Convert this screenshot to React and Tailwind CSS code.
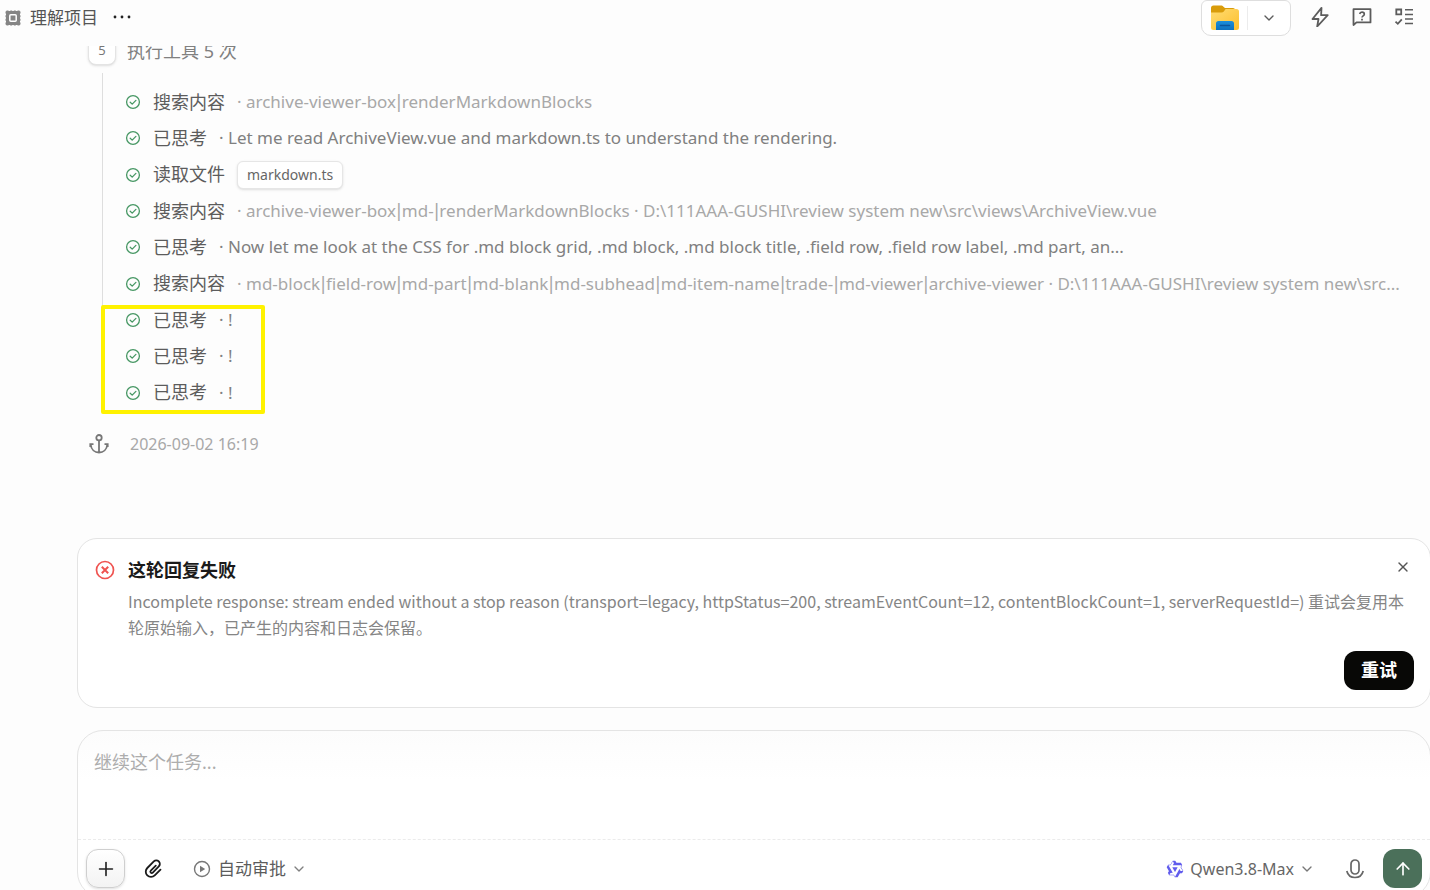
import {
    ArrowUp,
    ChevronDown,
    Plus,
    X
} from "lucide-react";
import React, { Fragment } from "react";

const steps = [
    { label: "搜索内容", text: "archive-viewer-box|renderMarkdownBlocks" },
    { label: "已思考", text: "Let me read ArchiveView.vue and markdown.ts to understand the rendering.", thought: true },
    { label: "读取文件", file: "markdown.ts" },
    { label: "搜索内容", text: "archive-viewer-box|md-|renderMarkdownBlocks · D:\\111AAA-GUSHI\\review system new\\src\\views\\ArchiveView.vue" },
    { label: "已思考", text: "Now let me look at the CSS for .md block grid, .md block, .md block title, .field row, .field row label, .md part, an...", thought: true },
    { label: "搜索内容", text: "md-block|field-row|md-part|md-blank|md-subhead|md-item-name|trade-|md-viewer|archive-viewer · D:\\111AAA-GUSHI\\review system new\\src..." },
    { label: "已思考", text: "!", thought: true },
    { label: "已思考", text: "!", thought: true },
    { label: "已思考", text: "!", thought: true },
];

const ProjectIcon = () => (
    <svg className="w-4 h-4 shrink-0" viewBox="0 0 16 16" fill="none">
        <rect x="1" y="1" width="14" height="14" rx="0.500" fill="#858585" />
        <path d="M2.500.500v15M6.200.500v15M9.800.500v15M13.500.500v15M.500 2.500h15M.500 6.200h15M.500 9.800h15M.500 13.500h15" stroke="#858585" strokeWidth="2" />
        <rect x="4.800" y="4.800" width="6.400" height="6.400" rx="1" fill="#858585" stroke="#fff" strokeWidth="1.500" />
    </svg>
);

const FolderIcon = () => (
    <svg className="w-7 h-[26px]" viewBox="0 0 28 26">
        <defs>
            <linearGradient id="folder" x1="0" y1="0" x2="1" y2="1">
                <stop offset="0" stopColor="#ffdc73" />
                <stop offset="1" stopColor="#fdbf2d" />
            </linearGradient>
            <linearGradient id="tray" x1="0" y1="0" x2="0" y2="1">
                <stop offset="0" stopColor="#1b8fdc" />
                <stop offset="1" stopColor="#0f70bd" />
            </linearGradient>
        </defs>
        <path d="M0 3a2.500 2.500 0 0 1 2.500-2.500h7.500c1 0 1.600.300 2.200 1L14 3H22a2 2 0 0 1 2 2V12H0Z" fill="#d99c0b" />
        <path d="M0 7.500h10.500c1 0 1.700-.300 2.300-.900l1.800-2.600h10.900A2.500 2.500 0 0 1 28 6.500v16a2.500 2.500 0 0 1-2.500 2.500h-23A2.500 2.500 0 0 1 0 22.500Z" fill="url(#folder)" />
        <path d="M5 25v-6.500A2.500 2.500 0 0 1 7.500 16h13a2.500 2.500 0 0 1 2.500 2.500V25Z" fill="url(#tray)" />
        <path d="M9.500 20.500h9" stroke="#0b559c" strokeWidth="1.500" strokeLinecap="round" />
    </svg>
);

const BoltIcon = () => (
    <svg className="w-5 h-5" viewBox="0 0 20 20" fill="none" stroke="currentColor" strokeWidth="1.8" strokeLinejoin="round">
        <path d="M11.500.9 2.500 12h6L7.200 19.500 17.700 8.200h-6.600Z" />
    </svg>
);

const HelpChatIcon = () => (
    <svg className="w-5 h-5" viewBox="0 0 20 20" fill="none" stroke="currentColor" strokeWidth="1.8">
        <path d="M1.500 18V2.200h17v13.200H4.500Z" strokeLinejoin="round" />
        <path d="M7.700 7c.200-1.200 1.100-1.800 2.300-1.800s2.300.800 2.300 2c0 1.600-2.300 1.700-2.300 3.400M10 11.700v1.700" strokeWidth="1.700" />
    </svg>
);

const TodoIcon = () => (
    <svg className="w-5 h-5" viewBox="0 0 20 20" fill="none" stroke="currentColor" strokeWidth="1.8">
        <path d="M2.300 2.500h4.900v4.900H2.300ZM1.500 14.600l2.300 2.200 4-4.400" />
        <path d="M11 2.800h8M11 7.500h8M11 12h8M11 16.500h8" strokeWidth="1.500" />
    </svg>
);

const CheckIcon = () => (
    <svg className="w-4 h-4 shrink-0 text-[#479764]" viewBox="0 0 16 16" fill="none" stroke="currentColor" strokeWidth="1.3" strokeLinecap="round" strokeLinejoin="round">
        <circle cx="8" cy="8" r="6.400" />
        <path d="m5.200 8.200 2 1.900 3.700-3.700" />
    </svg>
);

const AnchorIcon = () => (
    <svg className="w-5 h-5" viewBox="0 0 20 20" fill="none" stroke="currentColor" strokeWidth="1.800">
        <circle cx="10" cy="3.700" r="2.700" />
        <path d="M10 6.400V18.500M1.300 13V10.200H4.500M18.700 13V10.200H15.500M1.700 10.500c.500 5 4 8 8.300 8s7.800-3 8.300-8" />
    </svg>
);

const FailIcon = () => (
    <svg className="w-5 h-5 shrink-0 text-[#ef5350]" viewBox="0 0 20 20" fill="none" stroke="currentColor" strokeWidth="1.7">
        <circle cx="10" cy="10" r="8.500" />
        <path d="m6.800 6.800 6.400 6.400M13.200 6.800l-6.400 6.400" strokeWidth="2" />
    </svg>
);

const ClipIcon = () => (
    <svg className="w-5 h-5" viewBox="0 0 20 20" fill="none" stroke="currentColor" strokeWidth="1.8" strokeLinecap="round" strokeLinejoin="round">
        <path d="m12.800 6.600-5 5a1.400 1.400 0 0 0 2 2l6-6.200a3.500 3.500 0 0 0-5-5L4.300 9a5.200 5.200 0 0 0 7.400 7.400l5.800-5.800" />
    </svg>
);

const PlayIcon = () => (
    <svg className="w-[18px] h-[18px]" viewBox="0 0 18 18" fill="none">
        <circle cx="9" cy="9" r="7.500" stroke="#777" strokeWidth="1.400" />
        <path d="M7 5.800v6.400L12.200 9Z" fill="#777" />
    </svg>
);

const QwenIcon = () => (
    <svg className="w-[18px] h-[18px]" viewBox="0 0 24 24" fill="#615ced">
        <path d="M12.604 1.340c.393.690.784 1.382 1.174 2.075a.180.180 0 0 0 .157.091h5.552c.174 0 .322.110.446.327l1.454 2.570c.190.337.240.478.024.837-.260.430-.513.864-.760 1.300l-.367.658c-.106.196-.223.280-.040.512l2.652 4.637c.172.301.111.494-.043.770-.437.785-.882 1.564-1.335 2.340-.159.272-.352.375-.680.370-.777-.016-1.552-.010-2.327.016a.099.099 0 0 0-.081.050 575.097 575.097 0 0 1-2.705 4.740c-.169.293-.380.363-.725.364-.997.003-2.002.004-3.017.002a.537.537 0 0 1-.465-.271l-1.335-2.323a.090.090 0 0 0-.083-.049H4.982c-.285.030-.553-.001-.805-.092l-1.603-2.770a.543.543 0 0 1-.002-.540l1.207-2.120a.198.198 0 0 0 0-.197 550.951 550.951 0 0 1-1.875-3.272l-.790-1.395c-.160-.310-.173-.496.095-.965.465-.813.927-1.625 1.387-2.436.132-.234.304-.334.584-.335a338.300 338.300 0 0 1 2.589-.001.124.124 0 0 0 .107-.063l2.806-4.895a.488.488 0 0 1 .422-.246c.524-.001 1.053 0 1.583-.006L11.704 1c.341-.003.724.032.900.340Zm-3.432.403a.060.060 0 0 0-.052.030L6.254 6.788a.157.157 0 0 1-.135.078H3.253c-.056 0-.070.025-.041.074l5.810 10.156c.025.042.013.062-.034.063l-2.795.015a.218.218 0 0 0-.200.116l-1.320 2.310c-.044.078-.021.118.068.118l5.716.008c.046 0 .080.020.104.061l1.403 2.454c.046.081.092.082.139 0l5.006-8.760.783-1.382a.055.055 0 0 1 .096 0l1.424 2.530a.122.122 0 0 0 .107.062l2.763-.020a.040.040 0 0 0 .035-.020.041.041 0 0 0 0-.040l-2.900-5.086a.108.108 0 0 1 0-.113l.293-.507 1.120-1.977c.024-.041.012-.062-.035-.062H9.200c-.059 0-.073-.026-.043-.077l1.434-2.505a.107.107 0 0 0 0-.114L9.225 1.774a.060.060 0 0 0-.053-.031Zm6.290 8.020c.046 0 .058.020.034.060l-.832 1.465-2.613 4.585a.056.056 0 0 1-.050.029.058.058 0 0 1-.050-.029L8.498 9.841c-.020-.034-.010-.052.028-.054l.216-.012 6.722-.012Z" />
    </svg>
);

const MicIcon = () => (
    <svg className="w-5 h-5" viewBox="0 0 20 20" fill="none" stroke="currentColor" strokeWidth="1.700">
        <rect x="6" y="1" width="8" height="14" rx="4" />
        <path d="M1.800 12c1 4 4 6.500 8.200 6.500s7.200-2.500 8.200-6.500" />
    </svg>
);

// Search patterns get a narrower bar between their alternatives
const Pattern = ({ text }) =>
    text.split("|").map((part, i) => (
        <Fragment key={i}>
            {i > 0 && <span className="font-['DejaVu_Sans',sans-serif]">|</span>}
            {part}
        </Fragment>
    ));

const Step = ({ step }) => (
    <li className="flex items-center min-w-0">
        <CheckIcon />
        <span className="ms-3 shrink-0 text-[18px] text-[#5c5c5c]">{step.label}</span>
        {step.file ? (
            <button className="ms-3 h-7 px-[9px] rounded-md border border-[#e6e6e6] bg-white text-[14px] text-[#666] shadow-sm">
                {step.file}
            </button>
        ) : (
            <span className={`ms-3 truncate text-[17px] leading-[26px] ${step.thought ? "text-[#808080]" : "text-[#a8a8a8]"}`}>
                · <Pattern text={step.text} />
            </span>
        )}
    </li>
);

const Header = () => (
    <header className="h-[46px] shrink-0 flex items-start justify-between ps-[5px] pe-4">
        <div className="h-9 flex items-center">
            <ProjectIcon />
            <h1 className="ms-[9px] text-[17px] text-[#555]">理解项目</h1>
            <button className="ms-[14px] p-px pb-[3px] text-[#222]" aria-label="更多">
                <svg className="w-[18px] h-1" viewBox="0 0 18 4" fill="currentColor">
                    <circle cx="2" cy="2" r="1.400" />
                    <circle cx="9" cy="2" r="1.400" />
                    <circle cx="16" cy="2" r="1.400" />
                </svg>
            </button>
        </div>
        <div className="flex items-start text-[#5c5c5c]">
            <div className="h-9 w-[90px] flex items-center rounded-b-[10px] rounded-t-md border border-[#dedede] bg-white">
                <button className="ps-[9px] pe-2" aria-label="打开文件夹">
                    <FolderIcon />
                </button>
                <button className="h-6 flex-1 flex items-center justify-center border-s border-[#ececec]" aria-label="选择应用">
                    <ChevronDown className="w-4 h-4" strokeWidth={2} />
                </button>
            </div>
            <div className="h-[34px] ms-[19px] flex items-center gap-[22px]">
                <button aria-label="快捷操作"><BoltIcon /></button>
                <button aria-label="帮助"><HelpChatIcon /></button>
                <button aria-label="任务列表"><TodoIcon /></button>
            </div>
        </div>
    </header>
);

const Timeline = () => (
    <section className="h-[475px] shrink-0 overflow-hidden ps-[88px] pe-[18px]">
        {/* Group title, scrolled partly under the header */}
        <div className="-mt-[9px] h-7 flex items-center">
            <span className="w-7 h-7 flex items-center justify-center rounded-lg border border-[#e4e4e4] bg-white text-[13px] text-[#777] shadow-sm">
                5
            </span>
            <h2 className="ms-[11px] text-[18px] text-[#808080]">执行工具 5 次</h2>
        </div>

        <div className="relative mt-2 ms-[14px] border-s border-[#dedede] ps-[22px] pt-[11px] pb-px">
            <ul className="grid h-[327px] auto-rows-fr">
                {steps.map((step, i) => (
                    <Step key={i} step={step} />
                ))}
            </ul>
            {/* Highlight over the last three steps */}
            <div className="absolute -start-0.5 -bottom-0.5 w-[164px] h-[109px] rounded-xs border-4 border-[#fff200]" />
        </div>

        <div className="mt-5 ps-px h-6 flex items-center text-[#777]">
            <AnchorIcon />
            <time className="ms-[21px] text-[16px] text-[#a8a8a8]">2026-09-02 16:19</time>
        </div>
    </section>
);

const FailureCard = () => (
    <section className="shrink-0 rounded-[20px] border border-[#e4e4e4] bg-white ps-[17px] pe-4 pt-[18px] pb-[17px]">
        <div className="flex items-start">
            <span className="pt-[3px]"><FailIcon /></span>
            <div className="ms-[13px] flex-1 min-w-0">
                <div className="flex items-start justify-between">
                    <h2 className="text-[18px] leading-[26px] font-bold text-[#1a1a1a]">这轮回复失败</h2>
                    <button className="pt-0.5 pe-[3px] text-[#555]" aria-label="关闭">
                        <X className="w-4 h-4" strokeWidth={2} />
                    </button>
                </div>
                <p className="mt-[5px] text-[16px] leading-[26px] text-[#858585] font-['Noto_Sans_CJK_SC',sans-serif]">
                    Incomplete response: stream ended without a stop reason (transport=legacy, httpStatus=200, streamEventCount=12, contentBlockCount=1, serverRequestId=) 重试会复用本轮原始输入，已产生的内容和日志会保留。
                </p>
            </div>
        </div>
        <div className="mt-[11px] flex justify-end">
            <button className="h-[39px] w-[70px] rounded-xl bg-[#080806] text-[18px] font-bold text-white">重试</button>
        </div>
    </section>
);

const Composer = () => (
    <form className="mt-[22px] shrink-0 rounded-[26px] border border-[#e4e4e4] bg-linear-to-b from-[#fcfcfc] to-white to-30%">
        <textarea
            className="block w-full h-[108px] resize-none bg-transparent px-4 pt-[18px] text-[18px] leading-[26px] outline-none placeholder:text-[#adadad]"
            placeholder="继续这个任务..."
            aria-label="继续这个任务"
        />
        <div className="h-[58px] flex items-center justify-between border-t border-dashed border-[#ebebeb] px-2">
            <div className="flex items-center">
                <button type="button" className="w-[39px] h-[39px] flex items-center justify-center rounded-xl border border-[#cfcfcf] bg-linear-to-b from-white to-[#f3f3f3] text-[#222] shadow-sm" aria-label="添加">
                    <Plus className="w-[22px] h-[22px]" strokeWidth={1.8} />
                </button>
                <button type="button" className="ms-[18px] text-[#1a1a1a]" aria-label="附件">
                    <ClipIcon />
                </button>
                <button type="button" className="ms-[30px] flex items-center text-[17px] text-[#5c5c5c]">
                    <PlayIcon />
                    <span className="ms-[7px]">自动审批</span>
                    <ChevronDown className="ms-[5px] w-4 h-4 text-[#808080]" />
                </button>
            </div>
            <div className="flex items-center">
                <button type="button" className="flex items-center text-[16px] text-[#666]">
                    <QwenIcon />
                    <span className="ms-[6px]">Qwen3.8-Max</span>
                    <ChevronDown className="ms-[5px] w-4 h-4 text-[#777]" />
                </button>
                <button type="button" className="ms-[30px] text-[#666]" aria-label="语音输入">
                    <MicIcon />
                </button>
                <button type="submit" className="ms-[18px] w-[39px] h-[39px] flex items-center justify-center rounded-xl bg-[#4b705a] text-white" aria-label="发送">
                    <ArrowUp className="w-5 h-5" strokeWidth={2} />
                </button>
            </div>
        </div>
    </form>
);

const App = () => {
    return (
        <div className="h-screen flex flex-col overflow-hidden bg-[#fdfdfd] font-['Noto_Sans','Noto_Sans_CJK_SC',sans-serif]" lang="zh-CN">
            <Header />
            <Timeline />
            <main className="ps-[77px] -me-px pt-[17px] flex flex-col">
                <FailureCard />
                <Composer />
            </main>
        </div>
    );
};

export default App;
